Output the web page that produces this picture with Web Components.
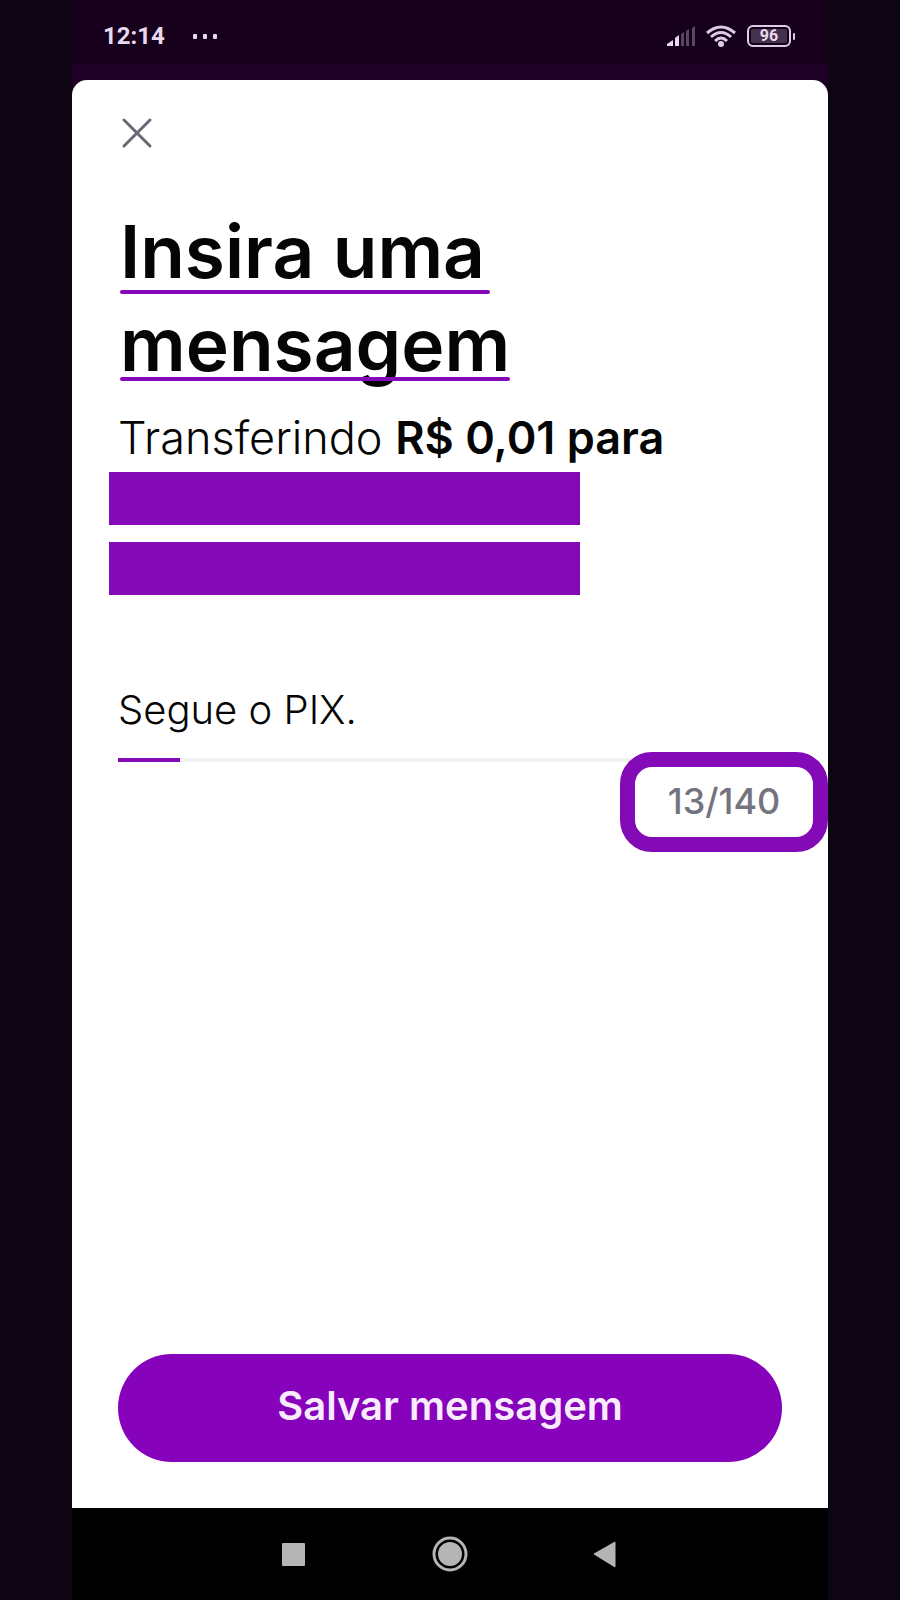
<!DOCTYPE html>
<html lang="pt-BR">
<head>
<meta charset="utf-8">
<meta name="viewport" content="width=device-width, initial-scale=1">
<title>Insira uma mensagem</title>
<style>
  body { margin: 0; background: #0d0511; font-family: Inter, "Liberation Sans", sans-serif; color: #050505; }
</style>
</head>
<body>
<phone-screen>
  <status-bar slot="status" time="12:14" battery="96"></status-bar>
  <message-sheet>
    <page-title>
      <title-line>Insira uma</title-line>
      <title-line tight>mensagem</title-line>
    </page-title>
    <transfer-summary>Transferindo <b>R$ 0,01 para</b></transfer-summary>
    <message-field value="Segue o PIX." count="13" limit="140"></message-field>
    <primary-button slot="footer">Salvar mensagem</primary-button>
  </message-sheet>
  <system-nav slot="nav"></system-nav>
</phone-screen>

<script>
const define = (name, html, setup) => customElements.define(name, class extends HTMLElement {
  constructor() {
    super();
    const template = document.createElement('template');
    template.innerHTML = html;
    this.attachShadow({ mode: 'open' }).append(template.content.cloneNode(true));
  }
  connectedCallback() { if (setup) setup(this, this.shadowRoot); }
});

define('phone-screen', `
<style>
  :host { display: flex; flex-direction: column; box-sizing: border-box; width: 84%; min-height: 100vh; margin: 0 auto; background: #1b0022; }
  main { flex: 1; display: flex; }
</style>
<slot name="status"></slot><main><slot></slot></main><slot name="nav"></slot>`);

define('status-bar', `
<style>
  :host { display: flex; align-items: center; justify-content: space-between; box-sizing: border-box; height: 80px; padding: 0 33px 8px 31px; color: #e9d9ee; font-family: Roboto, sans-serif; background: linear-gradient(#16001b 64px, #1d0025 64px); }
  .group { display: flex; align-items: center; }
  .left { gap: 28px; }
  .right { gap: 11px; }
  time { font-size: 24px; line-height: 32px; font-weight: 700; }
  svg { display: block; }
  .battery { display: flex; align-items: center; gap: 2px; }
  .cell { box-sizing: border-box; display: grid; place-items: center; width: 44px; height: 22px; border: 2px solid #dccde2; border-radius: 6px; background: #45304d; box-shadow: inset 0 0 0 2px #16001b; font-size: 16px; line-height: 18px; font-weight: 700; }
  .tip { width: 2px; height: 7px; background: #dccde2; border-radius: 1px; }
</style>
<div class="group left"><time></time>
  <svg width="26" height="6" viewBox="0 0 26 6" fill="currentColor" aria-hidden="true"><rect x="0" y="1" width="4" height="5" rx="1"/><rect x="10" y="1" width="4" height="5" rx="1"/><rect x="20" y="1" width="4" height="5" rx="1"/></svg>
</div>
<div class="group right">
  <svg width="29" height="22" viewBox="0 0 29 22" aria-label="Sinal" role="img"><path d="M1 21v-2l6-4v6z" fill="#e9d9ee"/><path d="M9 21v-8l4-3v11z" fill="#e9d9ee"/><path d="M15 21V9l3-2v14zM20 21V6l3-2v17zM26 21V3l3-2v20z" fill="#5b4662"/></svg>
  <svg width="30" height="22" viewBox="0 0 30 22" fill="none" stroke="#dccde2" stroke-width="3" aria-label="Wi-Fi" role="img"><path d="M1 8Q15-4 29 8M5 12Q15 3 25 12M9 16Q15 10 21 16"/><circle cx="15" cy="19" r="3" fill="#dccde2" stroke="none"/></svg>
  <div class="battery"><span class="cell"></span><span class="tip"></span></div>
</div>`, (el, root) => {
  root.querySelector('time').textContent = el.getAttribute('time');
  root.querySelector('.cell').textContent = el.getAttribute('battery');
});

define('message-sheet', `
<style>
  :host { flex: 1; display: flex; flex-direction: column; box-sizing: border-box; min-width: 0; padding: 34px 46px 46px; background: #fff; border-radius: 15px 15px 0 0; }
  .close { width: 38px; height: 38px; padding: 0; border: 0; background: none; }
  svg { display: block; }
  .content { flex: 1; display: flex; flex-direction: column; }
</style>
<button class="close" type="button" aria-label="Fechar"><svg width="38" height="38" viewBox="0 0 38 38" fill="none" stroke="#6b6875" stroke-width="3" stroke-linecap="round"><path d="M6 6l26 26M32 6L6 32"/></svg></button>
<div class="content"><slot></slot></div>
<slot name="footer"></slot>`);

define('page-title', `
<style>
  :host { display: block; margin-top: 53px; }
  h1 { display: flex; flex-direction: column; align-items: flex-start; margin: 0; padding-left: 2px; font-size: 73px; line-height: 93px; font-weight: 600; }
</style>
<h1><slot></slot></h1>`);

define('title-line', `
<style>
  :host { display: block; position: relative; padding-right: 5px; white-space: nowrap; }
  :host([tight]) { padding-right: 0; }
  .rule { position: absolute; left: 0; right: 0; bottom: 4px; height: 4px; border-radius: 2px; background: #850ab7; }
  :host([tight]) .rule { bottom: 10px; }
</style>
<slot></slot><span class="rule"></span>`);

define('transfer-summary', `
<style>
  :host { display: block; margin-top: 19px; }
  p { margin: 0; font-size: 45px; line-height: 56px; font-weight: 300; }
  ::slotted(b) { font-weight: 600; }
  .redacted { display: grid; gap: 17px; width: 71%; margin: 6px 0 0 -9px; }
  .redacted span { height: 53px; background: #850ab7; }
</style>
<p><slot></slot></p>
<div class="redacted"><span></span><span></span></div>`);

define('message-field', `
<style>
  :host { display: flex; flex-direction: column; margin-top: 87px; }
  input { width: 100%; box-sizing: border-box; height: 54px; margin: 0; padding: 0; border: 0; outline: 0; background: none; color: inherit; font-family: inherit; font-size: 40px; font-weight: 300; }
  .track { height: 4px; margin-top: 22px; background: #f3f2f4; }
  .bar { width: 62px; height: 4px; background: #850ab7; }
  output { align-self: flex-end; box-sizing: border-box; position: relative; width: 208px; margin: -10px -46px 0 0; padding: 10px 0 12px; border: 15px solid #850ab7; border-radius: 32px; background: #fff; text-align: center; font-size: 36px; line-height: 48px; font-weight: 500; color: #74747f; }
</style>
<input id="message" type="text" aria-label="Mensagem">
<div class="track"><div class="bar"></div></div>
<output for="message"></output>`, (el, root) => {
  root.querySelector('input').value = el.getAttribute('value');
  root.querySelector('output').textContent = el.getAttribute('count') + '/' + el.getAttribute('limit');
});

define('primary-button', `
<style>
  :host { display: block; }
  button { display: block; width: 100%; height: 108px; padding: 0 0 4px; border: 0; border-radius: 54px; background: #8703bb; color: #f8ecfc; font-family: inherit; font-size: 40px; line-height: 52px; font-weight: 600; }
</style>
<button type="button"><slot></slot></button>`);

define('system-nav', `
<style>
  :host { display: block; background: #000; }
  nav { display: flex; justify-content: center; align-items: center; gap: 116px; height: 92px; }
  button { width: 40px; height: 40px; padding: 0; border: 0; background: none; }
  svg { display: block; }
</style>
<nav aria-label="Sistema">
  <button type="button" aria-label="Recentes"><svg width="40" height="40" viewBox="0 0 40 40"><rect x="8" y="9" width="23" height="23" rx="1" fill="#b5b5b5"/></svg></button>
  <button type="button" aria-label="Início"><svg width="40" height="40" viewBox="0 0 40 40"><circle cx="20" cy="20" r="12" fill="#b5b5b5"/><circle cx="20" cy="20" r="16" fill="none" stroke="#b5b5b5" stroke-width="3"/></svg></button>
  <button type="button" aria-label="Voltar"><svg width="40" height="40" viewBox="0 0 40 40"><path d="M8 20L29 8v25z" fill="#b5b5b5" stroke="#b5b5b5" stroke-linejoin="round"/></svg></button>
</nav>`);
</script>
</body>
</html>
